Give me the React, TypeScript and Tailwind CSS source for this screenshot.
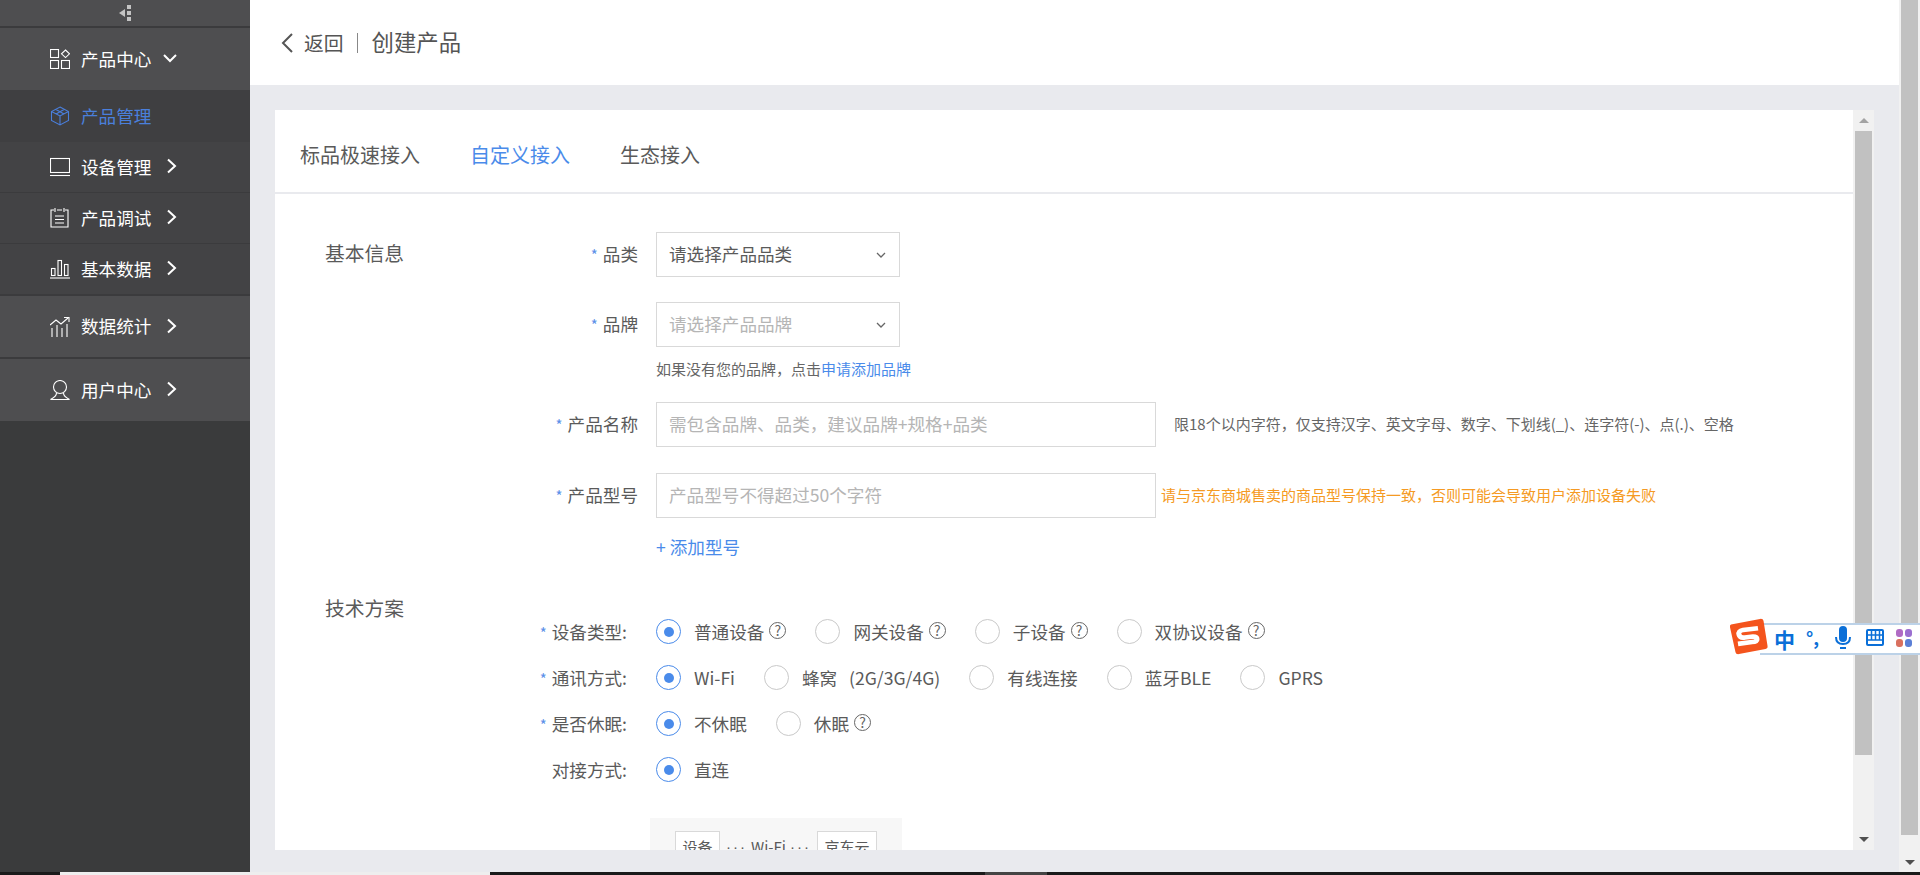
import type { ReactNode } from 'react';

const Chevron = ({ down = false }: { down?: boolean }) => (
    <svg width="16" height="16" viewBox="0 0 16 16" fill="none" stroke="#fff" strokeWidth="2">
        {down ? <path d="M2 5l6 6 6-6" /> : <path d="M4 1.500l7 6.500-7 6.500" />}
    </svg>
);

const iconProps = {
    width: 20,
    height: 20,
    viewBox: '0 0 20 20',
    fill: 'none',
    stroke: 'currentColor',
    strokeWidth: 1.1,
};

const GridIcon = () => (
    <svg {...iconProps}>
        <rect x="0.500" y="0.500" width="8" height="8" />
        <rect x="0.500" y="11.500" width="8" height="8" />
        <rect x="11.500" y="11.500" width="8" height="8" />
        <path d="M15.500 1l4 3.800-4 3.800-4-3.800z" />
    </svg>
);
const BoxIcon = () => (
    <svg {...iconProps}>
        <path d="M10 1l8.500 4.500v9L10 19l-8.500-4.500v-9zM1.500 5.500L10 10l8.500-4.500M10 10v9M5.500 3.300l8.500 4.700M14.500 3.300L6 8" />
    </svg>
);
const LaptopIcon = () => (
    <svg {...iconProps}>
        <rect x="0.500" y="1.500" width="19" height="14" />
        <path d="M0 18.500h20" />
    </svg>
);
const NoteIcon = () => (
    <svg {...iconProps}>
        <path d="M4 2H1v17h17V2h-3M7 2h5M5 0v4M14 0v4M5 8h9M5 11.500h9M5 15h9" />
    </svg>
);
const BarsIcon = () => (
    <svg {...iconProps}>
        <rect x="1.500" y="9.500" width="3.500" height="7" />
        <rect x="8" y="1.500" width="3.500" height="15" />
        <rect x="14.500" y="5.500" width="3.500" height="11" />
        <path d="M0 19h20" />
    </svg>
);
const TrendIcon = () => (
    <svg {...iconProps}>
        <path d="M0 8l6-5 5 4 7-6M14 .5h5v4.500M2 11v9M7 8v12M12 11v9M17 7v13" />
    </svg>
);
const UserIcon = () => (
    <svg {...iconProps}>
        <circle cx="10" cy="7" r="6.500" />
        <path d="M6.500 13c0 3-3 5-6 6.500h19c-3-1.500-6-3.500-6-6.500" />
    </svg>
);

const menu = [
    { label: '设备管理', icon: <LaptopIcon />, cls: 'h-[51px] bg-[#434345] border-b border-[#3b3b3d]' },
    { label: '产品调试', icon: <NoteIcon />, cls: 'h-[51px] bg-[#434345] border-b border-[#3b3b3d]' },
    { label: '基本数据', icon: <BarsIcon />, cls: 'h-[52px] bg-[#434345] border-b-2 border-[#3b3b3d]' },
    { label: '数据统计', icon: <TrendIcon />, cls: 'h-[63px] bg-[#4e4e50] border-b-2 border-[#3b3b3d]' },
    { label: '用户中心', icon: <UserIcon />, cls: 'h-[62px] bg-[#4e4e50]' },
];

const MenuRow = ({ icon, label, cls, children }: { icon: ReactNode; label: string; cls: string; children?: ReactNode }) => (
    <div className={`flex items-center pl-[50px] ${cls}`}>
        <span className="w-[20px] h-[20px] mr-[11px]">{icon}</span>
        <span className="text-[17.600px] w-[71px] whitespace-nowrap">{label}</span>
        {children}
    </div>
);

const Sidebar = () => (
    <aside className="w-[250px] shrink-0 bg-[#3a3b3c] text-white flex flex-col">
        <div className="h-[28px] bg-[#4e4e50] border-b-2 border-[#3b3b3d] flex items-center justify-center gap-[2px]">
            <span className="w-0 h-0 border-y-[4px] border-y-transparent border-r-[6px] border-r-[#c4c4c4]" />
            <span className="flex flex-col gap-[2px]">
                <span className="w-[4px] h-[4px] bg-[#c4c4c4]" />
                <span className="w-[4px] h-[4px] bg-[#c4c4c4]" />
                <span className="w-[4px] h-[4px] bg-[#c4c4c4]" />
            </span>
        </div>
        <MenuRow icon={<GridIcon />} label="产品中心" cls="h-[62px] bg-[#4e4e50]">
            <span className="ml-[10px] -mt-[2px]"><Chevron down /></span>
        </MenuRow>
        <MenuRow icon={<BoxIcon />} label="产品管理" cls="h-[52px] bg-[#3f3f41] text-[#4a7fdc]" />
        {menu.map((m) => (
            <MenuRow key={m.label} icon={m.icon} label={m.label} cls={m.cls}>
                <span className="ml-[12px] -mt-[2px]"><Chevron /></span>
            </MenuRow>
        ))}
    </aside>
);

const Help = () => (
    <span className="ml-[5px] -mt-[3px] w-[17px] h-[17px] rounded-full border border-[#666] text-[#666] text-[14px] leading-[15px] text-center shrink-0">?</span>
);

const Radio = ({ label, checked = false, help = false }: { label: string; checked?: boolean; help?: boolean }) => (
    <div className="flex items-center">
        <span className={`w-[25px] h-[25px] rounded-full border flex items-center justify-center shrink-0 ${checked ? 'border-[#4a8bea]' : 'border-[#c9c9c9]'}`}>
            {checked && <span className="w-[10px] h-[10px] rounded-full bg-[#4a8bea]" />}
        </span>
        <span className="ml-[13px] whitespace-pre">{label}</span>
        {help && <Help />}
    </div>
);

const Star = () => <span className="text-[#5b8fe8] text-[15px] mr-[5px]">*</span>;

const fieldRows = [
    {
        label: '设备类型:',
        required: true,
        options: [
            { label: '普通设备', checked: true, help: true },
            { label: '网关设备', help: true },
            { label: '子设备', help: true },
            { label: '双协议设备', help: true },
        ],
    },
    {
        label: '通讯方式:',
        required: true,
        options: [
            { label: 'Wi-Fi', checked: true },
            { label: '蜂窝   (2G/3G/4G)' },
            { label: '有线连接' },
            { label: '蓝牙BLE' },
            { label: 'GPRS' },
        ],
    },
    {
        label: '是否休眠:',
        required: true,
        options: [
            { label: '不休眠', checked: true },
            { label: '休眠', help: true },
        ],
    },
    { label: '对接方式:', required: false, options: [{ label: '直连', checked: true }] },
];

const Select = ({ text, placeholder = false }: { text: string; placeholder?: boolean }) => (
    <div className={`w-[244px] h-[45px] border border-[#d9d9d9] flex items-center justify-between pl-[12px] pr-[12px] ${placeholder ? 'text-[#b5b5b5]' : ''}`}>
        <span>{text}</span>
        <svg width="12" height="12" viewBox="0 0 12 12" fill="none" stroke="#666" strokeWidth="1.300"><path d="M2 4l4 4 4-4" /></svg>
    </div>
);

const TextInput = ({ text }: { text: string }) => (
    <div className="w-[500px] h-[45px] border border-[#d9d9d9] flex items-center pl-[12px] text-[#b5b5b5] shrink-0">{text}</div>
);

const FormRow = ({ label, children, cls }: { label: string; children: ReactNode; cls: string }) => (
    <div className={`flex items-center ${cls}`}>
        <div className="w-[331px] pr-[18px] text-right"><Star />{label}</div>
        {children}
    </div>
);

const Dots = () => <span className="font-['Liberation_Sans'] tracking-[2px]">···</span>;

const Card = () => (
    <div className="flex h-[740px] bg-white overflow-hidden">
        <div className="flex-1 text-[#5a5a5a] text-[17.600px] overflow-hidden">
            <div className="h-[84px] border-b-2 border-[#e9eaee] flex items-center pl-[25px] pt-[8px] gap-[50px] text-[20px]">
                <span>标品极速接入</span>
                <span className="text-[#4a8bea]">自定义接入</span>
                <span>生态接入</span>
            </div>

            <div className="pl-[50px] pt-[38px]">
                <div className="flex">
                    <div className="text-[19.800px] w-[0px] whitespace-nowrap mt-[6px]">基本信息</div>
                    <div>
                        <FormRow label="品类" cls="">
                            <Select text="请选择产品品类" />
                        </FormRow>
                        <FormRow label="品牌" cls="mt-[25px]">
                            <Select text="请选择产品品牌" placeholder />
                        </FormRow>
                        <div className="ml-[331px] mt-[11px] text-[15px] leading-[22px] text-[#666]">
                            如果没有您的品牌，点击<span className="text-[#4a8bea]">申请添加品牌</span>
                        </div>
                        <FormRow label="产品名称" cls="mt-[22px]">
                            <TextInput text="需包含品牌、品类，建议品牌+规格+品类" />
                            <span className="ml-[18px] text-[15px] whitespace-nowrap text-[#666]">限18个以内字符，仅支持汉字、英文字母、数字、下划线(_)、连字符(-)、点(.)、空格</span>
                        </FormRow>
                        <FormRow label="产品型号" cls="mt-[26px]">
                            <TextInput text="产品型号不得超过50个字符" />
                            <span className="ml-[5px] text-[15px] whitespace-nowrap text-[#f59a23]">请与京东商城售卖的商品型号保持一致，否则可能会导致用户添加设备失败</span>
                        </FormRow>
                        <div className="ml-[331px] mt-[16px] text-[#4a8bea] leading-[26px]">+ 添加型号</div>
                    </div>
                </div>

                <div className="flex mt-[37px]">
                    <div className="text-[19.800px] w-[0px] whitespace-nowrap -mt-[4px]">技术方案</div>
                    <div className="mt-[12px]">
                        {fieldRows.map((row) => (
                            <div key={row.label} className="flex items-center h-[46px]">
                                <div className="w-[302px] text-right whitespace-nowrap">
                                    {row.required && <Star />}
                                    {row.label}
                                </div>
                                <div className="ml-[29px] flex items-center gap-[29px]">
                                    {row.options.map((o) => <Radio key={o.label} {...o} />)}
                                </div>
                            </div>
                        ))}
                        <div className="ml-[325px] mt-[25px] w-[252px] h-[80px] bg-[#f7f7f7] pl-[25px] pt-[13px]">
                            <div className="flex items-center text-[15px] whitespace-nowrap">
                                <span className="w-[45px] h-[32px] border border-[#d9d9d9] bg-white flex items-center justify-center shrink-0">设备</span>
                                <span className="w-[97px] flex items-center justify-center gap-[4px] shrink-0">
                                    <Dots />
                                    <span>Wi-Fi</span>
                                    <Dots />
                                </span>
                                <span className="w-[60px] h-[32px] border border-[#d9d9d9] bg-white flex items-center justify-center shrink-0">京东云</span>
                            </div>
                        </div>
                    </div>
                </div>
            </div>
        </div>

        <div className="w-[21px] shrink-0 bg-[#f1f1f1] flex flex-col items-center">
            <div className="h-[21px] flex items-center justify-center">
                <span className="w-0 h-0 border-x-[5px] border-x-transparent border-b-[5px] border-b-[#a3a3a3]" />
            </div>
            <div className="w-[17px] h-[624px] bg-[#c1c1c1]" />
            <div className="flex-1 flex items-end pb-[8px]">
                <span className="w-0 h-0 border-x-[5px] border-x-transparent border-t-[5px] border-t-[#505050]" />
            </div>
        </div>
    </div>
);

const Ime = () => (
    <div className="absolute left-[1728px] top-[618px] w-[192px] h-[40px] flex items-center">
        <div className="absolute left-[32px] right-0 top-[5px] h-[32px] bg-white border-y-2 border-[#bcd2e8]" />
        <svg className="absolute left-0 top-0" width="40" height="37" viewBox="0 0 40 40" preserveAspectRatio="none">
            <path d="M3 7l29-6q3-.5 3.500 2l4 27q.5 3-2 3.500L11 39q-3 .5-3.500-2L2 10q-.5-2.500 1-3z" fill="#f4541d" />
            <path d="M30 11l-15 2q-5 1-4 5t6 3l8-1q4 0 4 3t-5 3l-14 2" fill="none" stroke="#fff" strokeWidth="5" />
        </svg>
        <span className="absolute left-[46px] top-[7px] text-[21px] leading-[28px] font-bold text-[#0a6fd8]">中</span>
        <span className="absolute left-[78px] top-[9px] text-[18px] leading-[20px] font-bold text-[#0a6fd8]">°,</span>
        <svg className="absolute left-[107px] top-[8px]" width="16" height="26" viewBox="0 0 16 26" fill="#0a6fd8">
            <rect x="4" y="0" width="8" height="16" rx="4" />
            <path d="M1 11q0 7 7 7t7-7" fill="none" stroke="#0a6fd8" strokeWidth="2" />
            <rect x="5" y="21" width="6" height="2" />
        </svg>
        <svg className="absolute left-[138px] top-[11px]" width="18" height="19" viewBox="0 0 18 19" fill="none" stroke="#0a6fd8" strokeWidth="2">
            <rect x="1" y="1" width="16" height="15" rx="1" />
            <path d="M1 6h16M1 11h16M5.500 1v10M9.500 1v10M13.500 1v10" strokeWidth="1.500" />
        </svg>
        <svg className="absolute left-[167px] top-[10px]" width="18" height="20" viewBox="0 0 18 20">
            <rect x="1" y="1" width="7" height="8" rx="3" fill="#b06bc4" />
            <rect x="10" y="1" width="7" height="8" rx="3" fill="#9b6fd0" />
            <rect x="1" y="11" width="7" height="8" rx="3" fill="#d9705f" />
            <rect x="10" y="11" width="7" height="8" rx="3" fill="#5b7fd6" />
        </svg>
    </div>
);

export default function App() {
    return (
        <div className="relative h-[875px] w-[1920px] overflow-hidden font-['Noto_Sans_CJK_SC','Liberation_Sans',sans-serif]">
            <div className="flex h-[872px]">
                <Sidebar />
                <main className="flex-1 bg-[#e9eaee] flex flex-col">
                    <header className="h-[85px] bg-white flex items-center pl-[31px] text-[#555]">
                        <svg width="12" height="20" viewBox="0 0 12 20" fill="none" stroke="#555" strokeWidth="2"><path d="M11 1l-9 9 9 9" /></svg>
                        <span className="ml-[11px] text-[19.800px]">返回</span>
                        <span className="ml-[13px] w-px h-[20px] bg-[#888]" />
                        <span className="ml-[14px] text-[22.400px] -mt-[1px]">创建产品</span>
                    </header>
                    <div className="pt-[25px] pl-[25px] pr-[25px]">
                        <Card />
                    </div>
                </main>
                <div className="w-[21px] shrink-0 bg-[#f1f1f1] flex flex-col items-end">
                    <div className="w-[17px] mr-[2px] h-[835px] bg-[#c1c1c1]" />
                    <div className="w-full flex-1 flex items-end justify-center pb-[7px]">
                        <span className="w-0 h-0 border-x-[5px] border-x-transparent border-t-[5px] border-t-[#505050]" />
                    </div>
                </div>
            </div>
            <div className="h-[3px] bg-[#1a1a1a] flex">
                <span className="ml-[60px] w-[430px] bg-[#eeeeee]" />
                <span className="ml-[495px] w-[62px] bg-[#444444]" />
            </div>
            <Ime />
        </div>
    );
}
